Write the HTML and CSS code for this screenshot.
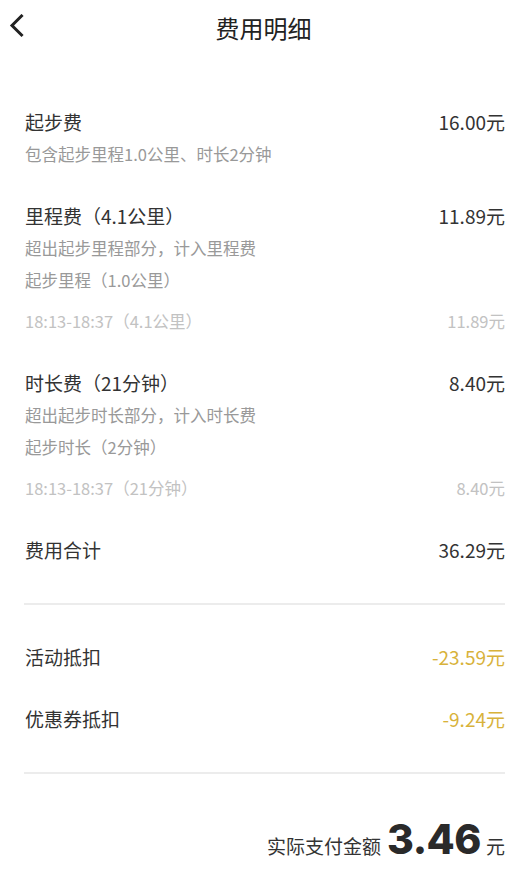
FILE: index.html
```html
<!DOCTYPE html>
<html lang="zh-CN">
<head>
    <meta charset="UTF-8">
    <meta name="viewport" content="width=device-width, initial-scale=1.0">
    <title>费用明细</title>
    <link rel="stylesheet" href="styles.css">
</head>
<body>
    <div class="header">
        <a class="back" href="#">
            <svg width="16" height="24" viewBox="0 0 16 24">
                <polyline points="13.5,2 4,11.5 13.5,21" fill="none" stroke="#222" stroke-width="3" stroke-linecap="square" stroke-linejoin="miter"/>
            </svg>
        </a>
        <h1>费用明细</h1>
    </div>

    <div class="content">
        <div class="item">
            <div class="row main"><span>起步费</span><span>16.00元</span></div>
            <div class="row sub"><span>包含起步里程1.0公里、时长2分钟</span></div>
        </div>

        <div class="item">
            <div class="row main"><span>里程费（4.1公里）</span><span>11.89元</span></div>
            <div class="row sub"><span>超出起步里程部分，计入里程费</span></div>
            <div class="row sub"><span>起步里程（1.0公里）</span></div>
            <div class="row time"><span>18:13-18:37（4.1公里）</span><span>11.89元</span></div>
        </div>

        <div class="item">
            <div class="row main"><span>时长费（21分钟）</span><span>8.40元</span></div>
            <div class="row sub"><span>超出起步时长部分，计入时长费</span></div>
            <div class="row sub"><span>起步时长（2分钟）</span></div>
            <div class="row time"><span>18:13-18:37（21分钟）</span><span>8.40元</span></div>
        </div>

        <div class="item">
            <div class="row main"><span>费用合计</span><span>36.29元</span></div>
        </div>

        <div class="divider"></div>

        <div class="item discount-first">
            <div class="row main"><span>活动抵扣</span><span class="minus">-23.59元</span></div>
        </div>
        <div class="item">
            <div class="row main"><span>优惠券抵扣</span><span class="minus">-9.24元</span></div>
        </div>

        <div class="divider"></div>

        <div class="total">
            <span class="total-label">实际支付金额</span>
            <span class="total-num">3.46</span>
            <span class="total-unit">元</span>
        </div>
    </div>
</body>
</html>
```

FILE: styles.css
```css
body {
    margin: 0;
    background: #fff;
    font-family: "Noto Sans CJK SC", "Noto Sans", sans-serif;
    color: #333;
}
.header {
    height: 54px;
    display: flex;
    align-items: center;
    justify-content: center;
    position: relative;
}
.header h1 {
    margin: 0;
    font-size: 24px;
    font-weight: 400;
    color: #222;
}
.back {
    position: absolute;
    left: 8px;
    top: 14px;
    display: block;
}
.content {
    padding: 22px 22px 0 25px;
}
.item {
    margin-top: 30px;
}
.row {
    display: flex;
    justify-content: space-between;
    line-height: 32px;
}
.main {
    font-size: 19px;
    color: #333;
}
.sub {
    font-size: 16.5px;
    color: #999;
}
.time {
    font-size: 16.5px;
    color: #c2c2c2;
    margin-top: 9px;
}
.minus {
    color: #d8b23a;
}
.divider {
    height: 2px;
    background: #ececec;
    margin: 37px 0 0 -1px;
}
.discount-first {
    margin-top: 36px;
}
.total {
    display: flex;
    justify-content: flex-end;
    align-items: baseline;
    margin-top: 40px;
}
.total-label {
    font-size: 19px;
    color: #333;
}
.total-num {
    font-family: Inter, "Noto Sans", sans-serif;
    font-weight: 800;
    font-size: 41px;
    color: #2a2a2a;
    margin: 0 5px 0 6px;
    letter-spacing: -0.5px;
}
.total-unit {
    font-size: 19px;
    color: #333;
}
```
